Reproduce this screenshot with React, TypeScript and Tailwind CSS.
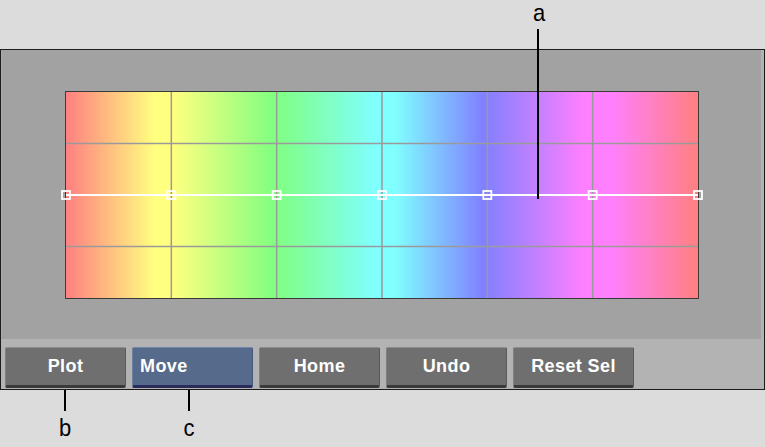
import React from "react";

const cols = [105.33, 210.67, 316, 421.33, 526.67];
const pts = [0, 105.33, 210.67, 316, 421.33, 526.67, 632];

function Btn({ label, active, left }: { label: string; active?: boolean; left?: boolean }) {
  return (
    <div
      className={
        "w-[121px] h-[41px] rounded-[2px] flex items-center text-white font-bold text-[18px] tracking-[0.4px] leading-none border-t border-l border-r border-b-[3px] " +
        (active
          ? "bg-[#566b8b] border-t-[#7088a8] border-l-[#6b7f9e] border-r-[#45577a] border-b-[#2a2c5c] "
          : "bg-[#6f6f6f] border-t-[#8c8c8c] border-l-[#808080] border-r-[#5a5a5a] border-b-[#3a3a3a] ") +
        (left ? "justify-start pl-[7px]" : "justify-center")
      }
    >
      <span className="translate-y-[-1px]">{label}</span>
    </div>
  );
}

export default function App() {
  return (
    <div className="w-[765px] h-[447px] bg-[#dcdcdc] relative overflow-hidden font-['Liberation_Sans',Arial,sans-serif]">
      <div className="h-[49px]" />
      <div className="h-[341px] border border-[#1c1c1c] bg-[#b3b3b3] flex flex-col">
        <div className="h-[289px] mr-[3px] bg-[#a2a2a2] border-l border-l-[#ababab] pl-[63px] pt-[41px]">
          <div className="w-[634px] h-[208px] border border-[#3a3a3a] relative bg-[linear-gradient(to_right,#ff8080_0%,#ffff80_14%,#ffff80_17%,#80ff80_33%,#80ffff_49%,#80ffff_52%,#8080ff_66%,#ff80ff_82%,#ff80ff_86%,#ff8080_100%)]">
            <svg className="absolute inset-0 overflow-visible" width="632" height="206" viewBox="0 0 632 206">
              {cols.map((x) => (
                <line key={x} x1={x} y1={0} x2={x} y2={206} stroke="#9a9a9a" strokeWidth={1.5} />
              ))}
              <line x1={0} y1={51.5} x2={632} y2={51.5} stroke="#9a9a9a" strokeWidth={1.5} />
              <line x1={0} y1={154.5} x2={632} y2={154.5} stroke="#9a9a9a" strokeWidth={1.5} />
              <line x1={0} y1={103} x2={632} y2={103} stroke="#ffffff" strokeWidth={2} />
              {pts.map((x) => (
                <rect key={x} x={x - 4} y={99} width={8} height={8} fill="none" stroke="#ffffff" strokeWidth={1.8} />
              ))}
            </svg>
          </div>
        </div>
        <div className="flex gap-[6px] pl-[4px] pt-[8px]">
          <Btn label="Plot" />
          <Btn label="Move" active left />
          <Btn label="Home" />
          <Btn label="Undo" />
          <Btn label="Reset Sel" />
        </div>
      </div>

      {/* annotations */}
      <div className="absolute left-[531px] top-[2px] w-[16px] text-center text-black text-[22px] leading-none scale-y-110">a</div>
      <div className="absolute left-[537px] top-[29px] w-[2px] h-[170px] bg-black" />
      <div className="absolute left-[64px] top-[390px] w-[2px] h-[21px] bg-black" />
      <div className="absolute left-[188px] top-[390px] w-[2px] h-[21px] bg-black" />
      <div className="absolute left-[57px] top-[417px] w-[16px] text-center text-black text-[22px] leading-none scale-y-110">b</div>
      <div className="absolute left-[181px] top-[417px] w-[16px] text-center text-black text-[22px] leading-none scale-y-110">c</div>
    </div>
  );
}
